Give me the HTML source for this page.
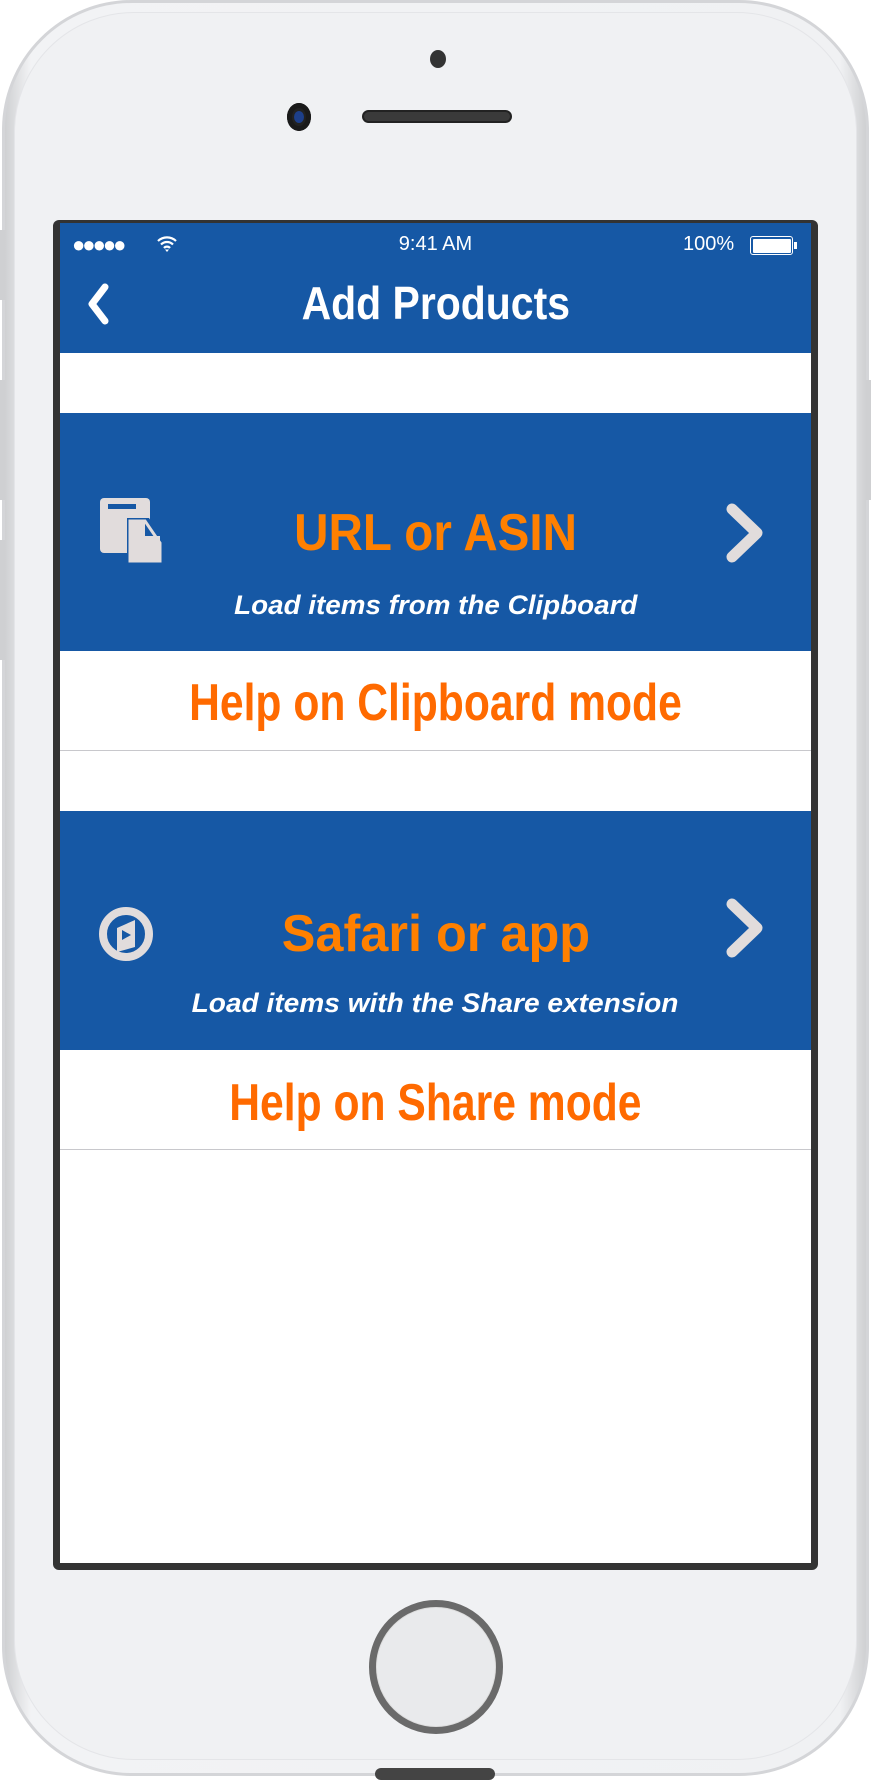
<!DOCTYPE html>
<html><head><meta charset="utf-8"><style>
*{margin:0;padding:0;box-sizing:border-box}
body{width:871px;height:1776px;background:#fff;position:relative;overflow:hidden;font-family:"Liberation Sans",sans-serif}
.abs{position:absolute}
.body{left:2px;top:0;width:867px;height:1776px;border-radius:130px;background:linear-gradient(90deg,#cfd0d2,#f2f3f5 3%,#f0f1f3 97%,#cfd0d2);border:3px solid #d4d5d8}
.inner{left:14px;top:12px;width:843px;height:1748px;border-radius:120px;background:#f0f1f3;border:1px solid #e4e5e8}
.frame{left:53px;top:220px;width:765px;height:1350px;background:#333;border-radius:6px}
.screen{left:60px;top:223px;width:751px;height:1340px;background:#fff;overflow:hidden}
.blue{background:#1658a5;left:0;width:751px}
.c{text-align:center;left:0;width:751px;font-weight:bold;white-space:nowrap}
.c span{display:inline-block}
</style></head><body>
<div class="abs body"></div>
<div class="abs inner"></div>
<div class="abs" style="left:430px;top:50px;width:16px;height:18px;border-radius:50%;background:#333"></div>
<div class="abs" style="left:287px;top:103px;width:24px;height:28px;border-radius:50%;background:#222;box-shadow:inset 0 0 0 5px #1a1a1a"><div style="margin:8px auto;width:10px;height:12px;border-radius:50%;background:#1d3f8a"></div></div>
<div class="abs" style="left:362px;top:110px;width:150px;height:13px;border-radius:7px;background:#3a3a3a;border:2px solid #222"></div>
<div class="abs" style="left:369px;top:1600px;width:134px;height:134px;border-radius:50%;border:7px solid #6a6a6a;background:#e9eaec;box-shadow:inset 0 0 0 1px #ddd"></div>
<div class="abs" style="left:0;top:230px;width:5px;height:70px;background:#cfd0d2"></div>
<div class="abs" style="left:0;top:380px;width:5px;height:120px;background:#cfd0d2"></div>
<div class="abs" style="left:0;top:540px;width:5px;height:120px;background:#cfd0d2"></div>
<div class="abs" style="left:866px;top:380px;width:5px;height:120px;background:#cfd0d2"></div>
<div class="abs frame"></div>
<div class="abs screen">
  <div class="abs blue" style="top:0;height:130px"></div>
  <div class="abs" style="left:12px;top:9px;color:#fff;font-size:22px;letter-spacing:-3px">●●●●●</div>
  <svg class="abs" style="left:96px;top:12px" width="22" height="18" viewBox="0 0 22 18"><path d="M2 6a13 13 0 0 1 18 0M5 9.5a8.5 8.5 0 0 1 12 0M8 13a4 4 0 0 1 6 0" stroke="#fff" stroke-width="2.2" fill="none"/><path d="M11 17l-2-2.5h4z" fill="#fff"/></svg>
  <div class="abs" style="left:0;width:751px;top:10px;text-align:center;color:#fff;font-size:20px">9:41 AM</div>
  <div class="abs" style="left:623px;top:10px;color:#fff;font-size:20px">100%</div>
  <div class="abs" style="left:690px;top:13px;width:43px;height:19px;border:1.5px solid #fff;border-radius:3px;padding:1.5px"><div style="background:#fff;width:100%;height:100%;border-radius:1px"></div></div>
  <div class="abs" style="left:734px;top:19px;width:3px;height:7px;background:#fff"></div>
  <svg class="abs" style="left:26px;top:60px" width="24" height="42" viewBox="0 0 24 42"><path d="M19 4L6 21l13 17" stroke="#fff" stroke-width="7" fill="none" stroke-linecap="round" stroke-linejoin="round"/></svg>
  <div class="abs c" style="top:54px;color:#fff;font-size:46px;line-height:52px"><span style="transform:scaleX(0.89)">Add Products</span></div>

  <div class="abs blue" style="top:190px;height:238px"></div>
  <svg class="abs" style="left:40px;top:275px" width="66" height="66" viewBox="0 0 66 66"><rect x="0" y="0" width="50" height="55" rx="4" fill="#e1dcdc"/><rect x="8" y="6" width="28" height="5" fill="#1658a5"/><path d="M27 20h22l14 22v24H27z" fill="#1658a5"/><path d="M30 23h15v15h15v25H30z" fill="#e1dcdc"/><path d="M46 23l14 14H46z" fill="#1658a5"/><path d="M30 23h15l15 22v18H30z" fill="none" stroke="#e1dcdc" stroke-width="3"/></svg>
  <div class="abs c" style="top:275px;color:#ff8000;font-size:52px;line-height:70px"><span style="transform:scaleX(0.915)">URL or ASIN</span></div>
  <div class="abs c" style="top:366px;color:#fff;font-size:27px;font-style:italic;line-height:32px"><span style="transform:scaleX(1.03)">Load items from the Clipboard</span></div>
  <svg class="abs" style="left:664px;top:280px" width="42" height="60" viewBox="0 0 42 60"><path d="M8 6l25 24L8 54" stroke="#e1dcdc" stroke-width="11" fill="none" stroke-linejoin="round" stroke-linecap="round"/></svg>
  <div class="abs" style="left:0;top:428px;width:751px;height:100px;border-bottom:1px solid #c8c8cc"></div>
  <div class="abs c" style="top:450px;color:#ff6a00;font-size:52px;line-height:60px"><span style="transform:scaleX(0.82)">Help on Clipboard mode</span></div>

  <div class="abs blue" style="top:588px;height:239px"></div>
  <svg class="abs" style="left:38px;top:683px" width="56" height="56" viewBox="0 0 56 56"><circle cx="28" cy="28" r="23" stroke="#e1dcdc" stroke-width="8" fill="none"/><path d="M19 22l18-8v27l-18 5z" fill="#e1dcdc"/><path d="M24 24v10l9-5z" fill="#1658a5"/></svg>
  <div class="abs c" style="top:676px;color:#ff8000;font-size:52px;line-height:70px"><span style="transform:scaleX(0.97)">Safari or app</span></div>
  <div class="abs c" style="top:764px;color:#fff;font-size:27px;font-style:italic;line-height:32px"><span style="transform:scaleX(1.04)">Load items with the Share extension</span></div>
  <svg class="abs" style="left:664px;top:675px" width="42" height="60" viewBox="0 0 42 60"><path d="M8 6l25 24L8 54" stroke="#e1dcdc" stroke-width="11" fill="none" stroke-linejoin="round" stroke-linecap="round"/></svg>
  <div class="abs" style="left:0;top:827px;width:751px;height:100px;border-bottom:1px solid #c8c8cc"></div>
  <div class="abs c" style="top:850px;color:#ff6a00;font-size:52px;line-height:60px"><span style="transform:scaleX(0.82)">Help on Share mode</span></div>
</div>
<div class="abs" style="left:375px;top:1768px;width:120px;height:12px;border-radius:6px;background:#444"></div>
</body></html>
